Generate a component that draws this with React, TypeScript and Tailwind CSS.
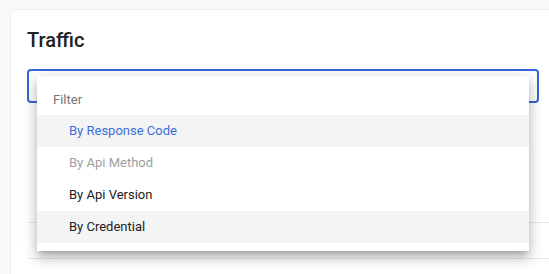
import React from "react";

type Item = {
    label: string
    state: "selected" | "disabled" | "normal"
    hover?: boolean
}

const items: Item[] = [
    { label: "By Response Code", state: "selected", hover: true },
    { label: "By Api Method", state: "disabled" },
    { label: "By Api Version", state: "normal" },
    { label: "By Credential", state: "normal", hover: true },
]

const App = () => {
    return (
        <div className="w-[549px] h-[274px] overflow-hidden bg-[#f8f8f8] font-['Roboto',sans-serif]">
            <div className="ml-[11px] mt-[10px] w-[560px] h-[300px] bg-white rounded-[4px] shadow-[0_0_0_1px_#f0f0f0] px-4 pt-4">
                <h1 className="text-[20px] leading-[28px] font-medium text-[#212121]">
                    Traffic
                </h1>

                {/* Filter field with open menu */}
                <div className="relative mt-[15px] w-[512px]">
                    <div className="h-[34px] rounded-[4px] border-2 border-[#3367d6]" />

                    <div className="absolute left-[10px] top-[7px] w-[492px] bg-white py-2 z-10 shadow-[0_5px_5px_-3px_rgba(0,0,0,0.2),0_8px_10px_1px_rgba(0,0,0,0.14),0_3px_14px_2px_rgba(0,0,0,0.12)]">
                        <div className="h-[31px] flex items-center pl-4 text-[13px] text-[#757575]">
                            Filter
                        </div>
                        {items.map((item) => (
                            <div
                                key={item.label}
                                className={
                                    item.hover
                                        ? "h-8 flex items-center pl-8 text-[13px] bg-[#f4f4f4]"
                                        : "h-8 flex items-center pl-8 text-[13px] bg-white"
                                }
                            >
                                <span
                                    className={
                                        item.state === "selected"
                                            ? "text-[#3b6fd8]"
                                            : item.state === "disabled"
                                                ? "text-[#9e9e9e]"
                                                : "text-[#212121]"
                                    }
                                >
                                    {item.label}
                                </span>
                            </div>
                        ))}
                    </div>
                </div>

                {/* table rows behind the menu */}
                <div className="mt-[119px] border-t border-[#e8e8e8] h-[36px]" />
                <div className="border-t border-[#e8e8e8]" />
            </div>
        </div>
    );
};

export default App;
